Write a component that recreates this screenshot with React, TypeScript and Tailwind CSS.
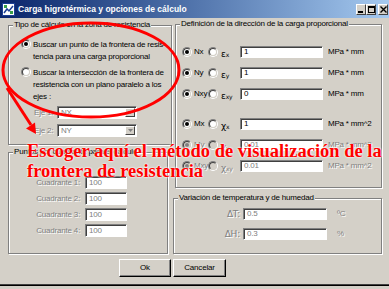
import React from "react";

const dis = "text-[#808080] [text-shadow:1px_1px_0_#ffffff]";

function Radio({ checked = false, disabled = false }: { checked?: boolean; disabled?: boolean }) {
  return (
    <span className="flex h-[10px] w-[10px] shrink-0 items-center justify-center rounded-full border border-[#808080] border-b-white border-r-white">
      <span
        className={`flex h-[8px] w-[8px] items-center justify-center rounded-full border border-[#404040] border-b-[#d4d0c8] border-r-[#d4d0c8] ${
          disabled ? "bg-[#d4d0c8]" : "bg-white"
        }`}
      >
        {checked && (
          <span className={`h-[4px] w-[4px] rounded-full ${disabled ? "bg-[#808080]" : "bg-black"}`} />
        )}
      </span>
    </span>
  );
}

function Field({ value, disabled = false, w }: { value: string; disabled?: boolean; w: string }) {
  return (
    <div
      className={`flex h-full items-center border border-[#808080] border-b-white border-r-white bg-white pl-[3px] shadow-[inset_1px_1px_0_#404040] ${w}`}
    >
      <span className={disabled ? dis : "text-black"}>{value}</span>
    </div>
  );
}

function Combo({ value }: { value: string }) {
  return (
    <div className="flex h-full w-[80px] items-stretch border border-[#808080] border-b-white border-r-white bg-white shadow-[inset_1px_1px_0_#404040]">
      <span className={`flex flex-1 items-center pl-[3px] pt-[1px] ${dis}`}>{value}</span>
      <span className="m-[1px] flex w-[10px] items-center justify-center border border-white border-b-[#404040] border-r-[#404040] bg-[#d4d0c8]">
        <svg width="5" height="3" viewBox="0 0 5 3">
          <path d="M0 0h5L2.5 3z" fill="#808080" />
        </svg>
      </span>
    </div>
  );
}

function Group({
  title,
  className,
  children,
}: {
  title: string;
  className: string;
  children: React.ReactNode;
}) {
  return (
    <fieldset
      className={`border border-[#808080] shadow-[inset_1px_1px_0_#ffffff,1px_1px_0_#ffffff] ${className}`}
    >
      <legend className="ml-[4px] bg-[#d4d0c8] px-[1px] leading-[10px]">{title}</legend>
      {children}
    </fieldset>
  );
}

function LoadRow({
  label,
  sym,
  sub,
  value,
  unit,
  disabled = false,
  className = "",
}: {
  label: string;
  sym: string;
  sub: string;
  value: string;
  unit: string;
  disabled?: boolean;
  className?: string;
}) {
  const tone = disabled ? dis : "text-black";
  return (
    <div className={`flex h-[12px] items-center ${className}`}>
      <Radio checked disabled={disabled} />
      <span className={`ml-[2px] w-[14px] ${tone}`}>{label}</span>
      <Radio disabled={disabled} />
      <span className={`ml-[3px] w-[19px] translate-y-[2px] font-['DejaVu_Sans',sans-serif] text-[9px] ${tone}`}>
        {sym}
        <span className="text-[6px]">{sub}</span>
      </span>
      <Field value={value} disabled={disabled} w="w-[83px]" />
      <span className={`ml-[5px] ${tone}`}>{unit}</span>
    </div>
  );
}

function TitleButton({ children }: { children: React.ReactNode }) {
  return (
    <div className="flex h-[11px] w-[10px] items-center justify-center border border-white border-b-[#404040] border-r-[#404040] bg-[#d4d0c8]">
      {children}
    </div>
  );
}

export default function App() {
  return (
    <div className="relative h-[289px] w-[389px] overflow-hidden bg-[#d4d0c8] font-['Liberation_Sans',Arial,sans-serif] text-[8px] leading-[12px] tracking-[-0.2px] text-black">
      {/* title bar */}
      <div className="flex h-[18px] items-center bg-gradient-to-r from-[#0a246a] to-[#a6caf0] pl-[2px] pr-[1px]">
        <svg width="13" height="13" viewBox="0 0 13 13">
          <rect x="0.5" y="0.5" width="12" height="12" fill="#ffffff" stroke="#1c3f94" />
          <path d="M2 10l3-4 2 2 4-5" stroke="#1c3f94" strokeWidth="1.5" fill="none" />
          <rect x="2" y="2" width="3" height="3" fill="#3aa04a" />
          <rect x="8" y="8" width="3" height="3" fill="#3aa04a" />
        </svg>
        <span className="ml-[3px] text-[8.5px] font-bold tracking-normal text-white">
          Carga higrotérmica y opciones de cálculo
        </span>
        <div className="ml-auto flex items-center">
          <TitleButton>
            <svg width="6" height="7" viewBox="0 0 6 7">
              <rect x="0" y="5" width="5" height="2" fill="#000" />
            </svg>
          </TitleButton>
          <TitleButton>
            <svg width="7" height="7" viewBox="0 0 7 7">
              <rect x="0.5" y="0.5" width="6" height="6" fill="none" stroke="#000" />
              <rect x="0" y="0" width="7" height="2" fill="#000" />
            </svg>
          </TitleButton>
          <div className="ml-[2px]">
            <TitleButton>
              <svg width="7" height="7" viewBox="0 0 7 7">
                <path d="M0.5 0.5l6 6M6.5 0.5l-6 6" stroke="#000" strokeWidth="1.4" />
              </svg>
            </TitleButton>
          </div>
        </div>
      </div>

      {/* body */}
      <div className="flex pl-[8px]">
        <div className="flex w-[164px] flex-col">
          <Group title="Tipo de cálculo en la zona de resistencia" className="mt-[2px] h-[125px]">
            <div className="flex flex-col pl-[12px] pt-[9px]">
              <div className="flex items-start">
                <Radio checked />
                <span className="ml-[2px]">
                  Buscar un punto de la frontera de resis-
                  <br />
                  tencia para una carga proporcional
                </span>
              </div>
              <div className="mt-[4px] flex items-start">
                <Radio />
                <span className="ml-[2px]">
                  Buscar la intersección de la frontera de
                  <br />
                  resistencia con un plano paralelo a los
                  <br />
                  ejes :
                </span>
              </div>
              <div className="mt-[3px] flex h-[13px] items-center">
                <span className={`ml-[13px] w-[23px] ${dis}`}>Eje 1:</span>
                <Combo value="NX" />
              </div>
              <div className="mt-[5px] flex h-[13px] items-center">
                <span className={`ml-[13px] w-[23px] ${dis}`}>Eje 2:</span>
                <Combo value="NY" />
              </div>
            </div>
          </Group>

          <Group title="Puntos por cuadrante para el cálculo" className="mt-[2px] h-[107px] w-[160px]">
            <div className="flex flex-col gap-[3px] pt-[19px]">
              {["Cuadrante 1:", "Cuadrante 2:", "Cuadrante 3:", "Cuadrante 4:"].map((q) => (
                <div key={q} className="flex h-[13px] items-center">
                  <span className={`w-[71px] text-right ${dis}`}>{q}</span>
                  <div className="ml-[5px] h-full">
                    <Field value="100" disabled w="w-[42px]" />
                  </div>
                </div>
              ))}
            </div>
          </Group>
        </div>

        <div className="ml-[3px] flex w-[207px] flex-col">
          <Group title="Definición de la dirección de la carga proporcional" className="mt-[1px] h-[169px]">
            <div className="flex flex-col pl-[6px] pt-[17px]">
              <LoadRow label="Nx" sym="ε" sub="x" value="1" unit="MPa * mm" />
              <LoadRow label="Ny" sym="ε" sub="y" value="1" unit="MPa * mm" className="mt-[9px]" />
              <LoadRow label="Nxy" sym="ε" sub="xy" value="0" unit="MPa * mm" className="mt-[9px]" />
              <LoadRow label="Mx" sym="χ" sub="x" value="1" unit="MPa * mm^2" className="mt-[18px]" />
              <LoadRow label="My" sym="χ" sub="y" value="0.01" unit="MPa * mm^2" disabled className="mt-[9px]" />
              <LoadRow label="Mxy" sym="χ" sub="xy" value="0.01" unit="MPa * mm^2" disabled className="mt-[9px]" />
            </div>
          </Group>

          <Group title="Variación de temperatura y de humedad" className="-ml-[2px] mt-[5px] h-[61px] w-[209px]">
            <div className="flex flex-col gap-[8px] pt-[5px]">
              <div className="flex h-[12px] items-center">
                <span className={`w-[66px] text-right font-['DejaVu_Sans',sans-serif] text-[9px] ${dis}`}>ΔT:</span>
                <div className="ml-[3px] h-full">
                  <Field value="0.5" disabled w="w-[84px]" />
                </div>
                <span className={`ml-[10px] ${dis}`}>ºC</span>
              </div>
              <div className="flex h-[12px] items-center">
                <span className={`w-[66px] text-right font-['DejaVu_Sans',sans-serif] text-[9px] ${dis}`}>ΔH:</span>
                <div className="ml-[3px] h-full">
                  <Field value="0.3" disabled w="w-[84px]" />
                </div>
                <span className={`ml-[10px] ${dis}`}>%</span>
              </div>
            </div>
          </Group>
        </div>
      </div>

      {/* buttons */}
      <div className="mt-[5px] flex gap-[2px] pl-[119px]">
        <button className="flex h-[18px] w-[52px] items-center justify-center border border-white border-b-black border-r-black bg-[#d4d0c8] shadow-[inset_-1px_-1px_0_#808080]">
          Ok
        </button>
        <button className="flex h-[18px] w-[53px] items-center justify-center border border-white border-b-black border-r-black bg-[#d4d0c8] shadow-[inset_-1px_-1px_0_#808080]">
          Cancelar
        </button>
      </div>
      <div className="mt-[7px] h-[2px] border-t border-[#404040] bg-black" />

      {/* red annotation */}
      <svg className="pointer-events-none absolute left-0 top-0" width="389" height="289" viewBox="0 0 389 289">
        <ellipse cx="91" cy="70" rx="88" ry="47" fill="none" stroke="#ff0000" strokeWidth="3" />
        <line x1="7" y1="88" x2="31" y2="125" stroke="#ff0000" strokeWidth="3" />
        <polygon points="36,134 26,128.5 35,122.5" fill="#ff0000" />
      </svg>
      <div className="pointer-events-none absolute left-[27px] top-[141px] whitespace-nowrap font-['Liberation_Serif','Times_New_Roman',serif] text-[18.5px] font-bold leading-[20px] tracking-normal text-[#ff0000] [text-shadow:0_0_2px_#ffffff,0_0_2px_#ffffff]">
        Escoger aquí el método de visualización de la
        <br />
        frontera de resistencia
      </div>
    </div>
  );
}
